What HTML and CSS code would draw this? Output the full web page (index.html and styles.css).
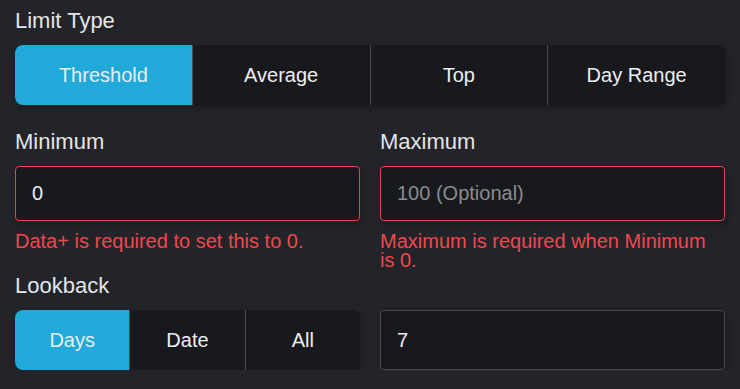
FILE: index.html
```html
<!DOCTYPE html>
<html lang="en">
<head>
  <meta charset="UTF-8" />
  <meta name="viewport" content="width=device-width, initial-scale=1.0"/>
  <title>Limit Settings</title>
  <link rel="stylesheet" href="styles.css">
</head>
<body>
  <div class="panel">
    <div class="field">
      <div class="label">Limit Type</div>
      <div class="segmented">
        <button class="seg active">Threshold</button>
        <button class="seg">Average</button>
        <button class="seg">Top</button>
        <button class="seg">Day Range</button>
      </div>
    </div>

    <div class="grid">
      <div class="field">
        <div class="label">Minimum</div>
        <input class="text-input invalid" type="text" value="0" />
        <div class="error">Data+ is required to set this to 0.</div>
      </div>
      <div class="field">
        <div class="label">Maximum</div>
        <input class="text-input invalid" type="text" placeholder="100 (Optional)" />
        <div class="error">Maximum is required when Minimum is 0.</div>
      </div>

      <div class="field">
        <div class="label">Lookback</div>
        <div class="segmented tall">
          <button class="seg active">Days</button>
          <button class="seg">Date</button>
          <button class="seg">All</button>
        </div>
      </div>
      <div class="field bottom">
        <input class="text-input tall" type="text" value="7" />
      </div>
    </div>
  </div>
</body>
</html>
```

FILE: styles.css
```css
body { margin: 0; background: #222429; font-family: "Liberation Sans", Arial, sans-serif; color: #e6e7e9; }
.panel { padding: 8px 15px 0; }
.label { font-size: 22px; color: #e4e5e7; margin-bottom: 11px; }
.segmented { display: flex; height: 60px; background: #18191d; border-radius: 8px; overflow: hidden; box-shadow: 2px 3px 6px rgba(0,0,0,0.25); }
.seg { flex: 1; border: none; background: #18191d; color: #eceef0; font-family: inherit; font-size: 20px; padding: 0; cursor: pointer; }
.seg + .seg { border-left: 1px solid #4b4c51; }
.seg.active { background: #21a9d9; color: #e8eef2; }
.grid { display: grid; grid-template-columns: 345px 345px; column-gap: 20px; margin-top: 24px; }
.bottom { display: flex; align-items: flex-end; }
.text-input { box-sizing: border-box; width: 100%; height: 55px; padding: 0 16px; background: #18191d; border: 1px solid #4b4c51; border-radius: 4px; color: #eceef0; font-family: inherit; font-size: 20px; outline: none; box-shadow: 2px 3px 6px rgba(0,0,0,0.25); }
.text-input.tall { height: 60px; }
.text-input::placeholder { color: #8a8b8f; }
.text-input.invalid { border-color: #e0474c; }
.error { margin-top: 11px; font-size: 20px; line-height: 19px; color: #f0474c; min-height: 19px; }
.grid > .field:nth-child(-n+2) { margin-bottom: 3px; }
```
